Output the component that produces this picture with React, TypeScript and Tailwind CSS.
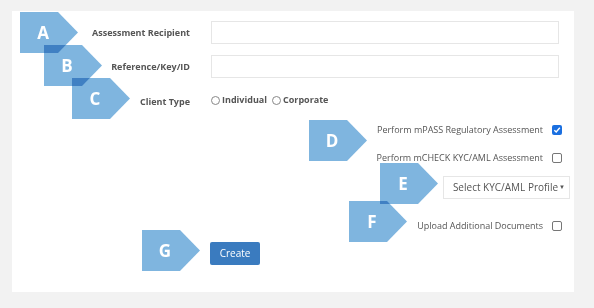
import React from "react";

const Badge = ({ letter, x, y }: { letter: string; x: number; y: number }) => {
  return (
    <div className="absolute h-[41px] w-[58px]" style={{ left: x, top: y }}>
      <svg width="58" height="41" viewBox="0 0 58 41" className="absolute left-0 top-0 mix-blend-multiply">
        <polygon points="0,0 38,0 58,20.5 38,41 0,41" fill="#7fb5df" />
      </svg>
      <span className="absolute left-0 top-0 flex h-[41px] w-[46px] items-center justify-center text-[17px] font-bold text-white">
        {letter}
      </span>
    </div>
  );
};

const Check = ({ checked }: { checked?: boolean }) =>
  checked ? (
    <span className="flex h-[10px] w-[10px] items-center justify-center rounded-[2px] bg-[#1a6fe0]">
      <svg width="8" height="8" viewBox="0 0 8 8">
        <path d="M1.3 4.2 L3.2 6 L6.8 1.8" stroke="white" strokeWidth="1.4" fill="none" />
      </svg>
    </span>
  ) : (
    <span className="h-[10px] w-[10px] rounded-[2px] border border-[#767676] bg-white" />
  );

const Radio = () => <span className="inline-block h-[9px] w-[9px] rounded-full border border-[#888] bg-white" />;

export default function App() {
  return (
    <div className="h-[308px] w-[594px] overflow-hidden bg-[#f2f2f2] pt-[11px] pl-[12px] font-['Open_Sans',sans-serif]">
      <div className="relative flex h-[281px] w-[562px] flex-col bg-white pt-[10px]">
        <div className="flex h-[23px] items-center">
          <label className="w-[178px] text-right text-[9px] font-bold text-[#555]">Assessment Recipient</label>
          <div className="ml-[21px] h-[23px] w-[348px] border border-[#e6e6e6]" />
        </div>
        <div className="mt-[11px] flex h-[23px] items-center">
          <label className="w-[178px] text-right text-[9px] font-bold text-[#555]">Reference/Key/ID</label>
          <div className="ml-[21px] h-[23px] w-[348px] border border-[#e6e6e6]" />
        </div>
        <div className="mt-[15px] flex h-[14px] items-center">
          <label className="w-[178px] pt-[4px] text-right text-[9px] font-bold text-[#555]">Client Type</label>
          <div className="ml-[21px] flex items-center gap-[2px] text-[9px] font-bold text-[#555]">
            <Radio />
            <span>Individual</span>
            <span className="ml-[1px]" />
            <Radio />
            <span>Corporate</span>
          </div>
        </div>
        <div className="mt-[16px] flex h-[14px] items-center justify-end gap-[9px] pr-[12px] text-[9px] text-[#555]">
          <span>Perform mPASS Regulatory Assessment</span>
          <Check checked />
        </div>
        <div className="mt-[14px] flex h-[14px] items-center justify-end gap-[9px] pr-[12px] text-[9px] text-[#555]">
          <span>Perform mCHECK KYC/AML Assessment</span>
          <Check />
        </div>
        <div className="mt-[11px] flex justify-end pr-[4px]">
          <div className="flex h-[23px] w-[127px] items-center justify-end border border-[#e6e6e6] pr-[4px] text-[10px] text-[#555]">
            <span>Select KYC/AML Profile</span>
            <span className="ml-[1px] text-[6px]">▼</span>
          </div>
        </div>
        <div className="mt-[20px] flex h-[14px] items-center justify-end gap-[9px] pr-[12px] text-[9px] text-[#555]">
          <span>Upload Additional Documents</span>
          <Check />
        </div>
        <div className="mt-[9px] flex pl-[198px]">
          <button className="h-[23px] w-[50px] rounded-[2px] bg-[#3a7bbf] text-[10px] text-white">Create</button>
        </div>

        <Badge letter="A" x={8} y={1} />
        <Badge letter="B" x={32} y={34} />
        <Badge letter="C" x={60} y={67} />
        <Badge letter="D" x={297} y={109} />
        <Badge letter="E" x={368} y={152} />
        <Badge letter="F" x={337} y={190} />
        <Badge letter="G" x={130} y={219} />
      </div>
    </div>
  );
}
